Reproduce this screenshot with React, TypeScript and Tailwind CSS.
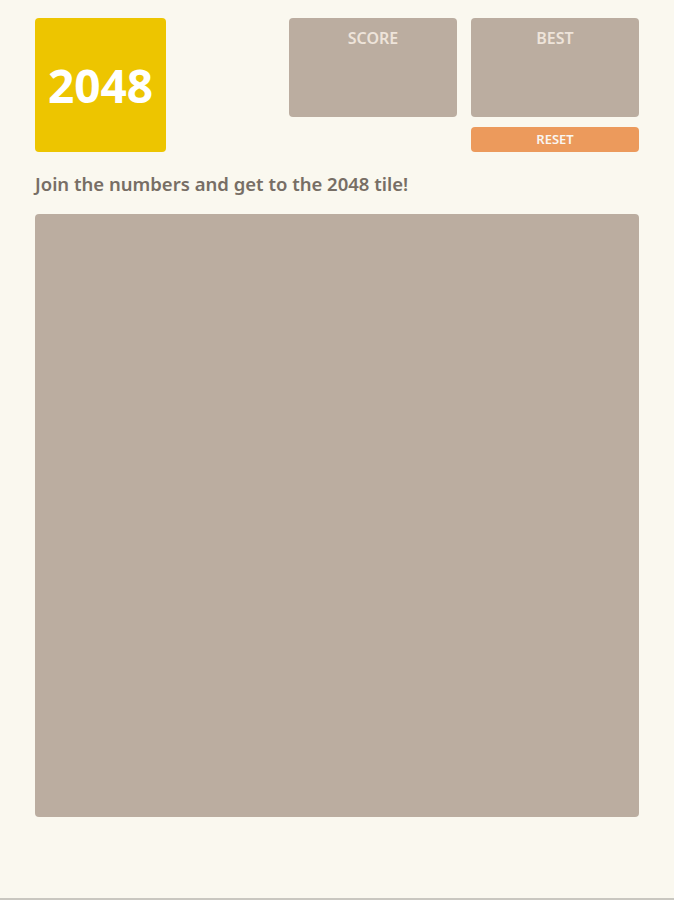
export default function App() {
  return (
    <div
      className="min-h-[900px] bg-[#faf8ef] border-b-2 border-[#c9c7c0]"
      style={{ fontFamily: "'Noto Sans', 'Open Sans', sans-serif" }}
    >
      <div className="ml-[35px] w-[604px] pt-[18px]">
        {/* Header */}
        <div className="flex items-start justify-between">
          <div className="flex h-[134px] w-[131px] items-center justify-center rounded-[4px] bg-[#edc500]">
            <h1 className="text-[46px] font-bold leading-none text-white">2048</h1>
          </div>
          <div className="flex gap-[14px]">
            <div className="flex h-[99px] w-[168px] justify-center rounded-[4px] bg-[#bbada0] pt-[10px]">
              <span className="text-[16px] font-semibold leading-5 text-[#eee4da]">SCORE</span>
            </div>
            <div className="flex flex-col gap-[10px]">
              <div className="flex h-[99px] w-[168px] justify-center rounded-[4px] bg-[#bbada0] pt-[10px]">
                <span className="text-[16px] font-semibold leading-5 text-[#eee4da]">BEST</span>
              </div>
              <button className="h-[25px] w-[168px] rounded-[4px] bg-[#ec9a5c] text-[13px] font-semibold text-[#f9f6f2]">
                RESET
              </button>
            </div>
          </div>
        </div>

        <p className="mt-[20px] text-[18.5px] font-semibold leading-6 text-[#776e65]">
          Join the numbers and get to the 2048 tile!
        </p>

        {/* Board */}
        <div className="mt-[18px] h-[603px] w-[604px] rounded-[4px] bg-[#bbada0]" />
      </div>
    </div>
  )
}
